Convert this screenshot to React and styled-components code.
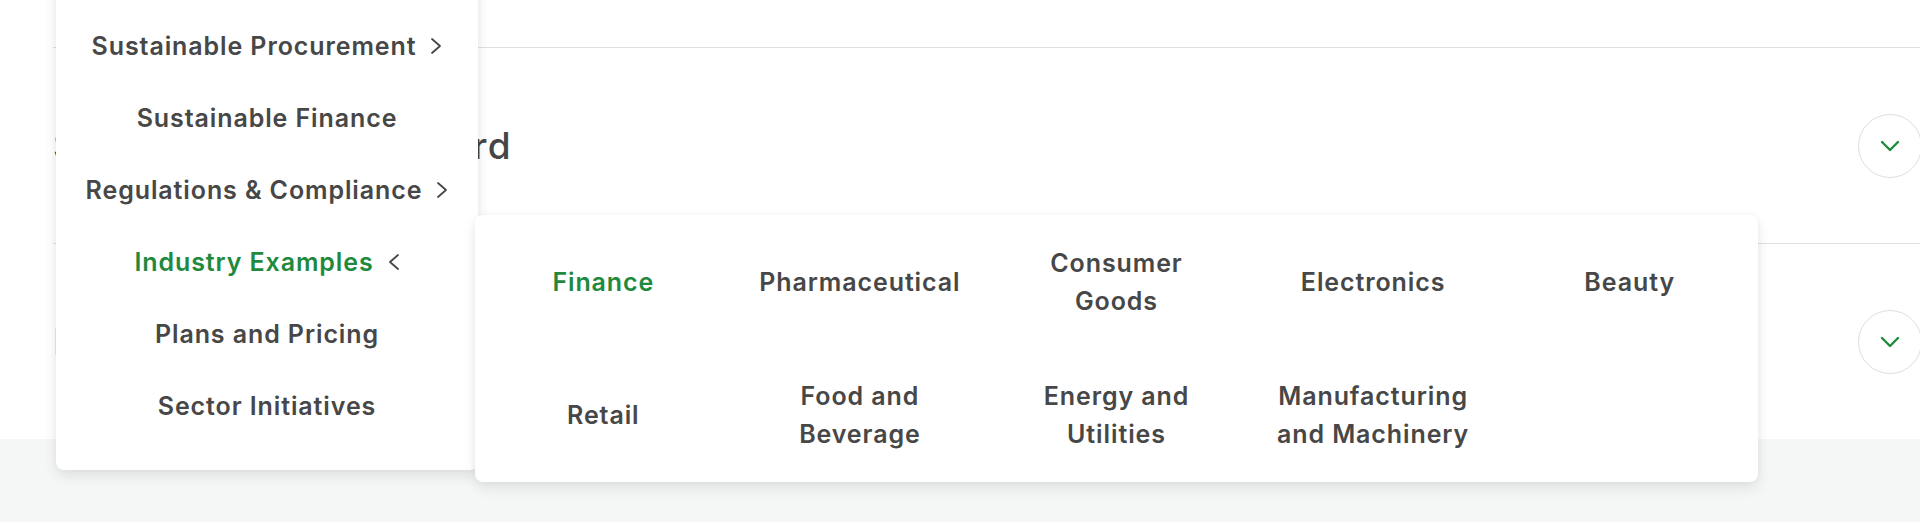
import React from "react";
import styled, { createGlobalStyle } from "styled-components";

const GlobalStyle = createGlobalStyle`
  html, body {
    margin: 0;
    padding: 0;
    background: #ffffff;
    overflow: hidden;
  }
  body {
    font-family: Inter, "Noto Sans", "Liberation Sans", sans-serif;
    color: #474747;
  }
  * { box-sizing: border-box; }
`;

const Page = styled.div`
  position: relative;
  width: 1920px;
  height: 522px;
  overflow: hidden;
  display: flex;
  flex-direction: column;
`;

const Accordion = styled.div`
  margin-left: 53px;
  margin-right: -2px;
  display: flex;
  flex-direction: column;
`;

const Item = styled.div`
  height: ${({ h }) => h}px;
  border-bottom: ${({ last }) => (last ? "none" : "1px solid #e0e0e0")};
  display: flex;
  align-items: center;
  justify-content: space-between;
`;

const Heading = styled.h2`
  margin: 0;
  font-size: 37px;
  font-weight: 500;
  color: #454545;
  letter-spacing: 1.2px;
`;

const RoundButton = styled.button`
  width: 64px;
  height: 64px;
  border-radius: 50%;
  border: 1.5px solid #dedede;
  background: #fff;
  display: flex;
  align-items: center;
  justify-content: center;
  padding: 0;
`;

const Band = styled.div`
  flex: 1;
  background: #f5f7f6;
`;

const Menu = styled.ul`
  position: absolute;
  left: 56px;
  top: -20px;
  width: 422px;
  margin: 0;
  padding: 30px 0 28px;
  list-style: none;
  background: #fff;
  border-radius: 0 0 8px 8px;
  box-shadow: 0 6px 14px rgba(0, 0, 0, 0.09), 0 0 6px rgba(0, 0, 0, 0.04);
  z-index: 2;
`;

const MenuRow = styled.li`
  height: 72px;
  display: flex;
  align-items: center;
  justify-content: center;
  font-size: 25px;
  font-weight: 600;
  letter-spacing: 0.9px;
  color: ${({ active }) => (active ? "#1f8a3e" : "#474747")};
`;

const Arrow = styled.svg`
  margin-left: 14px;
  flex: none;
`;

const Panel = styled.div`
  position: absolute;
  left: 475px;
  top: 215px;
  width: 1283px;
  height: 267px;
  background: #fff;
  border-radius: 8px;
  box-shadow: 0 6px 14px rgba(0, 0, 0, 0.09), 0 0 6px rgba(0, 0, 0, 0.04);
  display: grid;
  grid-template-columns: repeat(5, 1fr);
  grid-template-rows: repeat(2, 1fr);
  z-index: 3;
`;

const Industry = styled.div`
  display: flex;
  align-items: center;
  justify-content: center;
  text-align: center;
  white-space: pre-line;
  font-size: 25px;
  font-weight: 600;
  line-height: 38px;
  letter-spacing: 0.9px;
  color: ${({ active }) => (active ? "#1f8a3e" : "#474747")};
`;

const menuItems = [
  { label: "Sustainable Procurement", arrow: "right" },
  { label: "Sustainable Finance" },
  { label: "Regulations & Compliance", arrow: "right" },
  { label: "Industry Examples", arrow: "left", active: true },
  { label: "Plans and Pricing" },
  { label: "Sector Initiatives" },
];

const industries = [
  { label: "Finance", active: true },
  { label: "Pharmaceutical" },
  { label: "Consumer\nGoods" },
  { label: "Electronics" },
  { label: "Beauty" },
  { label: "Retail" },
  { label: "Food and\nBeverage" },
  { label: "Energy and\nUtilities" },
  { label: "Manufacturing\nand Machinery" },
];

const Chevron = ({ dir }) => (
  <Arrow width="12" height="18" viewBox="0 0 12 18">
    <polyline
      points={dir === "left" ? "10,2 2,9 10,16" : "2,2 10,9 2,16"}
      fill="none"
      stroke="#474747"
      strokeWidth="1.8"
      strokeLinecap="round"
      strokeLinejoin="round"
    />
  </Arrow>
);

const DownIcon = () => (
  <svg width="20" height="14" viewBox="0 0 20 14">
    <polyline
      points="2,3 10,11 18,3"
      fill="none"
      stroke="#1f8a3e"
      strokeWidth="2.4"
      strokeLinecap="round"
      strokeLinejoin="round"
    />
  </svg>
);

const App = () => {
  return (
    <>
      <GlobalStyle />
      <Page>
        <Accordion>
          <Item h={48} />
          <Item h={196}>
            <Heading>Sustainability Scorecard</Heading>
            <RoundButton>
              <DownIcon />
            </RoundButton>
          </Item>
          <Item h={195} last>
            <Heading>Industry Benchmarks</Heading>
            <RoundButton>
              <DownIcon />
            </RoundButton>
          </Item>
        </Accordion>
        <Band />

        <Menu>
          {menuItems.map((m) => (
            <MenuRow key={m.label} active={m.active}>
              {m.label}
              {m.arrow && <Chevron dir={m.arrow} />}
            </MenuRow>
          ))}
        </Menu>

        <Panel>
          {industries.map((it) => (
            <Industry key={it.label} active={it.active}>
              {it.label}
            </Industry>
          ))}
        </Panel>
      </Page>
    </>
  );
};

export default App;
